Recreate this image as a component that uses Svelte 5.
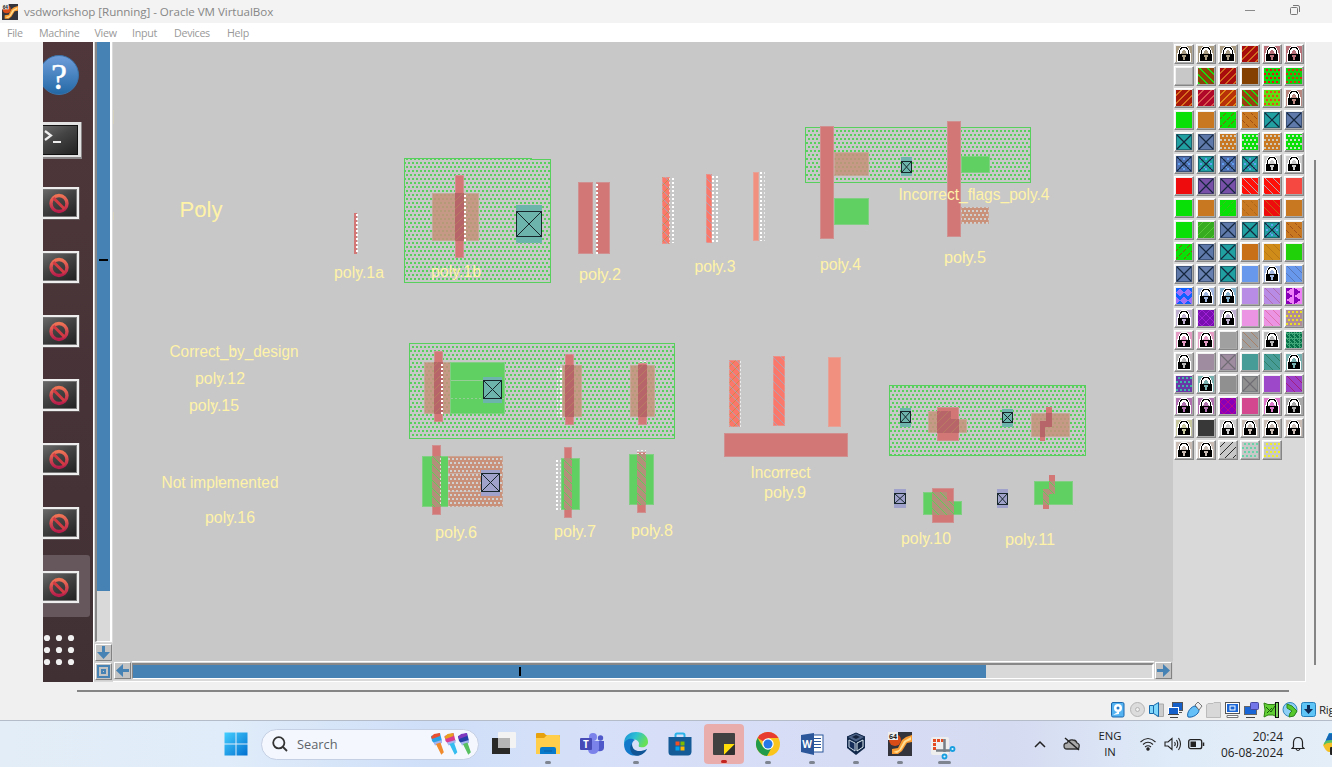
<script>
  const menus = [['File', 32], ['Machine', 55.5], ['View', 37.5], ['Input', 42], ['Devices', 53], ['Help', 40]];
  const stopped = [0, 1, 2, 3, 4, 5, 6];

  // Pixel diagonals, as unit squares, over an n by n tile.
  function hatch(n, test) {
    let d = '';
    for (let y = 0; y < n; y++) for (let x = 0; x < n; x++) if (test(x, y)) d += `M${x} ${y}h1v1h-1z`;
    return d;
  }
  const m = (v) => ((v % 8) + 8) % 8;
  const up = hatch(8, (x, y) => x + y === 7);
  const down = hatch(8, (x, y) => x === y);
  const inks = {
    slash: hatch(16, (x, y) => m(x + y) === 4 || m(x + y) === 5),
    thin: hatch(16, (x, y) => m(x + y) === 4),
    back: hatch(16, (x, y) => m(x - y) === 1 || m(x - y) === 2),
    fback: hatch(16, (x, y) => m(x - y) === 1),
    dslash: hatch(16, (x, y) => m(x + y) === 6 && m(x - y) < 5 && y % 15 > 0),
    dback: hatch(16, (x, y) => m(x - y) === 0 && m(x + y) < 5 && y % 15 > 0),
    dots: hatch(16, (x, y) => (y % 4 === 1 || y % 4 === 2) && ((x + ((y >> 2) % 2) * 2) % 4 >= 2)),
    wave: hatch(16, (x, y) => Math.abs(m(x + (y > 7 ? 4 : 0)) - 3.5) < (m(y) < 5 ? m(y) : 8 - m(y))),
    zig: hatch(16, (x, y) => Math.abs(m(y + (x > 7 ? 4 : 0)) - 3.5) < m(x) * 0.7),
    curl: hatch(16, (x, y) => Math.abs(m(x) - 3.5) + Math.abs(m(y) - 3.5) > 3 && Math.abs(m(x) - 3.5) + Math.abs(m(y) - 3.5) < 5),
    maze: hatch(16, (x, y) => ((x * 7 + y * 11 + x * y * 3) % 5) < 2)
  };

  const G = '#08e008', O = '#c87820', T = '#20a0a0', B = '#6079ab';
  // kind, ground, ink
  const layers = [
    ['lock', '#a99b82'], ['lock', '#a99b82'], ['lock', '#a99b82'], ['slash', '#a80c0c', '#d06c20'], ['lock', '#b87078'], ['lock', '#b87078'],
    ['solid', '#c8c8c8'], ['back', '#8c4408', '#18e010'], ['slash', '#a80c0c', '#d06820'], ['solid', '#844000'], ['dots', '#10d810', '#e81010'], ['dots', '#10d010', '#d83010'],
    ['slash', '#a81808', '#d87020'], ['slash', '#b00828', '#d85850'], ['slash', '#b83008', '#e08818'], ['back', '#984010', '#20d810'], ['dots', '#60e010', '#e84818'], ['lock', '#b88880'],
    ['solid', G], ['solid', O], ['dslash', G, '#905010'], ['dback', O, '#a04c10'], ['x', T], ['x', B],
    ['x', T], ['x', B], ['dots', O, '#d0c8b8'], ['dots', G, '#c8e0c8'], ['dots', O, '#d0c8b8'], ['dots', G, '#c8e0c8'],
    ['xd', '#5070b0'], ['xd', T], ['xd', '#5070b0'], ['xd', T], ['lock', '#cccccc'], ['lock', '#cccccc'],
    ['solid', '#ee0c0c'], ['x', '#7850a8'], ['x', '#7850a8'], ['fback', '#ff1008', '#b8a8b0'], ['fback', '#ff1008', '#b8a8b0'], ['solid', '#f44840'],
    ['solid', G], ['solid', O], ['dslash', G, '#40b820'], ['dback', O, '#b06818'], ['fback', '#ee0c0c', '#c86010'], ['solid', O],
    ['solid', G], ['thin', '#38ac20', '#58c838'], ['x', B], ['x', T], ['xd', T], ['dback', O, '#a05018'],
    ['dslash', G, '#905010'], ['x', B], ['x', T], ['solid', '#c87018'], ['fback', '#d08c18', '#b87818'], ['solid', '#20d008'],
    ['x', B], ['x', '#6880b0'], ['x', T], ['solid', '#6898ec'], ['lock', '#a0b4e0'], ['fback', '#6898ec', '#5878b8'],
    ['wave', '#1060ff', '#a070f8'], ['lock', '#a0b4e0'], ['lock', '#80b0cc'], ['solid', '#b88ce4'], ['fback', '#b88ce4', '#b070b0'], ['zig', '#8800b8', '#f080f8'],
    ['lock', '#c0b0d0'], ['curl', '#7810b0', '#a020d8'], ['lock', '#c0b0d0'], ['solid', '#ec94e4'], ['fback', '#ec94e4', '#e070b0'], ['dots', '#b08c98', '#e8e020'],
    ['lock', '#e49cc4'], ['lock', '#e49cc4'], ['solid', '#a0a0a0'], ['fback', '#a0a0a0', '#a88068'], ['lock', '#b8b8b8'], ['maze', '#087048', '#40a878'],
    ['lock', '#b8b8b8'], ['solid', '#a08ca0'], ['xg', '#a08ca0'], ['solid', '#489c98'], ['fback', '#489c98', '#308068'], ['lock', '#78b0b0'],
    ['dots', '#6838a8', '#40b8a8'], ['lock', '#78b0b0'], ['solid', '#909090'], ['xg', '#909090'], ['solid', '#9c48c8'], ['fback', '#9c40c8', '#a02080'],
    ['lock', '#b070b0'], ['lock', '#b070b0'], ['curl', '#8800b8', '#b80890'], ['solid', '#d44890'], ['lock', '#dc74c8'], ['lock', '#a8a8a8'],
    ['lock', '#c8c8a0'], ['solid', '#383838'], ['lock', '#cccccc'], ['lock', '#c8bcb4'], ['lock', '#c8bcb4'], ['lock', '#c8bcb4'],
    ['lock', '#c8bcb4'], ['lock', '#c8bcb4'], ['thin', '#c8c8c8', '#282828'], ['dots', '#c8c8c8', '#68d4a8'], ['dots', '#c8c8c8', '#f0f028']
  ];

  const wells = [[404, 158, 147, 125], [805, 127, 226, 56], [409, 343, 266, 96], [889, 385, 197, 71]];

  // fill class, x, y, w, h
  const shapes = [
    ['poly', 354, 213, 3, 41],
    ['diff', 432, 193, 47, 48], ['poly', 455, 175, 9, 83], ['gate', 455, 193, 9, 48],
    ['poly', 578, 182, 15, 72], ['poly', 596, 182, 14, 72],
    ['res', 662, 177, 8, 67], ['resb', 706, 174, 6, 69], ['soft', 753, 172, 6, 69],
    ['diff', 834, 152, 35, 24], ['act', 834, 198, 35, 27], ['poly', 820, 126, 14, 113],
    ['act', 961, 156, 29, 17], ['tap', 961, 207, 28, 17], ['poly', 947, 121, 14, 116],
    ['diff', 424, 362, 27, 52], ['act', 450, 362, 55, 52], ['poly', 434, 351, 9, 71], ['gate', 434, 362, 9, 52],
    ['diff', 562, 365, 20, 52], ['poly', 565, 354, 9, 71], ['gate', 565, 365, 9, 52],
    ['diff', 630, 365, 25, 52], ['poly', 638, 363, 9, 62], ['gate', 638, 365, 9, 52],
    ['act', 422, 456, 27, 51], ['tap', 448, 456, 55, 51], ['poly', 432, 445, 9, 70], ['ngate', 432, 456, 9, 51],
    ['act', 561, 458, 19, 52], ['poly', 564, 447, 8, 71], ['ngate', 564, 458, 8, 52],
    ['act', 629, 454, 25, 51], ['poly', 637, 452, 9, 61], ['ngate', 637, 454, 9, 51],
    ['res', 729, 360, 11, 67], ['resb', 773, 356, 12, 70], ['soft', 828, 357, 13, 70], ['poly', 724, 433, 124, 24],
    ['diff', 928, 411, 29, 22], ['diff', 957, 419, 10, 14], ['poly', 937, 407, 22, 34], ['gate', 937, 411, 14, 22], ['gate', 951, 419, 8, 14],
    ['diff', 1031, 413, 39, 24],
    ['act', 923, 492, 24, 23], ['act', 947, 501, 15, 14], ['poly', 932, 488, 22, 35], ['ngate', 932, 492, 15, 23], ['ngate', 947, 501, 7, 14],
    ['act', 1034, 481, 39, 24]
  ];

  // x, y of pad, w, h, contact y, contact h, class
  const contacts = [
    [516, 205, 26, 38, 211, 26, 'teal'], [901, 157, 11, 19, 161, 12, 'teal'], [483, 377, 19, 26, 380, 19, 'teal'],
    [481, 470, 19, 26, 473, 19, 'blue'], [900, 408, 11, 19, 411, 12, 'teal'], [1002, 409, 11, 18, 412, 11, 'teal'],
    [894, 489, 12, 19, 493, 11, 'blue'], [997, 489, 11, 19, 493, 12, 'blue']
  ];

  // x, y1, y2, width
  const ticks = [
    [356, 214, 254, 2], [464, 195, 241, 2], [596, 184, 254, 2], [669, 178, 243, 1], [672, 178, 243, 2],
    [712, 176, 243, 2], [716, 176, 243, 2], [760, 172, 241, 2], [764, 172, 241, 1], [441, 364, 414, 2],
    [560, 368, 417, 2], [557, 368, 417, 1], [440, 458, 506, 1], [556, 460, 510, 2], [560, 460, 510, 1], [740, 361, 427, 1]
  ];

  const labels = [
    ['Poly', 179.5, 217, 43, 22.5], ['poly.1a', 334, 278, 50], ['poly.1b', 431, 277, 50], ['poly.2', 579, 280, 42], ['poly.3', 694.5, 272, 41],
    ['poly.4', 820, 270, 41], ['Incorrect_flags_poly.4', 898.5, 200, 151], ['poly.5', 944, 263, 42],
    ['Correct_by_design', 169.5, 357, 129], ['poly.12', 195, 384, 50], ['poly.15', 189, 411, 50],
    ['Not implemented', 161.5, 488, 117], ['poly.16', 205, 523, 50], ['poly.6', 435, 538, 42], ['poly.7', 554, 537, 42],
    ['poly.8', 631, 536, 42], ['Incorrect', 750.5, 478, 60], ['poly.9', 764, 498, 42], ['poly.10', 901, 544, 50], ['poly.11', 1005, 545, 50]
  ];
</script>

{#snippet magic()}
  <rect width="24" height="24" fill="#34343c" />
  <circle cx="7" cy="8" r="6" fill="#d94b17" />
  <path d="M4 22V17L10 16L14 8L18 5L24 3V10L19 11L14 19L10 22Z" fill="#f99b31" />
  <path d="M5 20L11 18L16 9L23 5L23 8L18 10L13 18L9 21Z" fill="#ffe095" />
  <rect width="10" height="8" fill="#eee" />
  <text x="1" y="7" font-size="7" font-weight="700" fill="#222">64</text>
{/snippet}

<div class="screen">
  <header class="title">
    <svg width="16" height="16" viewBox="0 0 24 24">{@render magic()}</svg>
    <span>vsdworkshop [Running] - Oracle VM VirtualBox</span>
    <div class="winbtns">
      <svg width="12" height="12"><path d="M1 6.500H11" stroke="#8a8a8a" /></svg>
      <svg width="12" height="12" fill="none" stroke="#777"><rect x="1.500" y="3.500" width="7" height="7" rx="1" /><path d="M4 1.500H9Q10.500 1.500 10.500 3V8" /></svg>
    </div>
  </header>
  <nav>{#each menus as [name, w]}<span style="width:{w}px" class="menu">{name}</span>{/each}</nav>

  <main>
    <aside class="dock">
      <svg width="50" height="640" viewBox="43 42 50 640">
        <defs>
          <linearGradient id="help" x2="0" y2="1"><stop stop-color="#6f9edb" /><stop offset="1" stop-color="#2268a5" /></linearGradient>
          <linearGradient id="term" x2="1" y2="1"><stop stop-color="#777" /><stop offset=".5" stop-color="#444" /><stop offset="1" stop-color="#222" /></linearGradient>
          <linearGradient id="ban" x2="0" y2="1"><stop stop-color="#ee7355" /><stop offset="1" stop-color="#b81e4b" /></linearGradient>
        </defs>
        <circle cx="59" cy="75" r="19.500" fill="url(#help)" stroke="#3b73aa" />
        <text x="59" y="88.500" text-anchor="middle" class="q">?</text>
        <rect x="30" y="122" width="52" height="37" fill="#8a8587" /><rect x="30" y="122" width="51" height="35" fill="#e2e2e2" />
        <rect x="30" y="125" width="48" height="30" fill="#111" /><rect x="30" y="126" width="47" height="28" fill="url(#term)" />
        <path d="M45 131L51 135.500L45 140" fill="none" stroke="#eee" stroke-width="2.200" /><path d="M53 142H61" stroke="#eee" stroke-width="2" />
        <rect x="30" y="555" width="60" height="62" rx="3" fill="#66575c" />
        {#each stopped as i}
          <g transform="translate(0 {i * 64})">
            <rect x="30" y="187" width="50" height="33" fill="#777" opacity=".5" /><rect x="30" y="187" width="49" height="32" fill="#eee" />
            <rect x="30" y="189" width="47" height="28" fill="#777" /><rect x="30" y="190" width="46" height="26" fill="url(#term)" />
            <circle cx="59" cy="203.500" r="8" fill="none" stroke="url(#ban)" stroke-width="3.400" />
            <path d="M53.500 198L64.500 209" stroke="#d23b42" stroke-width="3" />
          </g>
        {/each}
        {#each [638, 650, 662] as y}{#each [47, 59, 71] as x}<circle cx={x} cy={y} r="3.100" fill="#f0f0f0" />{/each}{/each}
      </svg>
    </aside>

    <div class="vbar">
      <div class="vtrack"><div class="vthumb"><i></i></div></div>
      <div class="btn"><svg width="13" height="13"><path d="M5 0H8V6H13L6.500 13L0 6H5Z" /></svg></div>
      <div class="btn"><svg width="13" height="13"><path d="M0 0H13V13H0ZM2 2V11H11V2ZM4 4H9V9H4ZM6 6V7H7V6Z" fill-rule="evenodd" /></svg></div>
    </div>

    <section class="layout">
      <svg class="canvas" width="1060" height="619" viewBox="113 42 1060 619">
        <defs>
          <pattern id="well" width="4" height="8" patternUnits="userSpaceOnUse">
            <path d="M0 2h2v2h-2zM2 6h2v2h-2z" fill="#58d05c" />
          </pattern>
          <pattern id="tap" width="4" height="8" patternUnits="userSpaceOnUse">
            <rect width="4" height="8" fill="#c9917a" /><path d="M0 2h2v2h-2zM2 6h2v2h-2z" fill="#d0d0d0" />
          </pattern>
          <pattern id="gate" width="8" height="8" patternUnits="userSpaceOnUse">
            <rect width="8" height="8" fill="#b8656a" /><path d={up} fill="#b97c62" />
          </pattern>
          <pattern id="ngate" width="8" height="8" patternUnits="userSpaceOnUse">
            <rect width="8" height="8" fill="#b29079" /><path d={down} fill="#62cc58" />
          </pattern>
          <pattern id="resb" width="8" height="8" patternUnits="userSpaceOnUse">
            <rect width="8" height="8" fill="#f9786b" /><path d={down} fill="#b0a0b0" />
          </pattern>
          <pattern id="res" width="8" height="8" patternUnits="userSpaceOnUse">
            <rect width="8" height="8" fill="#f9786b" /><path d={up} fill="#cf8648" /><path d={down} fill="#b0a0b0" />
          </pattern>
        </defs>
        <g shape-rendering="crispEdges">
          {#each wells as [x, y, w, h]}
            <rect {x} {y} width={w} height={h} fill="url(#well)" />
            <rect x={x + 0.5} y={y + 0.5} width={w - 1} height={h - 1} fill="none" stroke="#58d05c" />
          {/each}
          <path d="M532 158.500H551" stroke="#c8c8c8" /><path d="M532 159.500H551" stroke="#58d05c" />
          {#each shapes as [c, x, y, w, h]}
            <rect class={c} {x} {y} width={w} height={h} />
            {#if c !== 'gate' && c !== 'ngate' && w > 3}<rect x={x + 0.5} y={y + 0.5} width={w - 1} height={h - 1} fill="none" stroke="#ccc" opacity=".3" />{/if}
          {/each}
          <path class="poly" d="M1046 407H1052V427H1045V441H1040V421H1046Z" />
          <path d="M1046 413H1052V427H1045V437H1040V421H1046Z" fill="#b8656a" />
          <path class="poly" d="M1049 475H1055V494H1049V509H1043V489H1049Z" />
          <path d="M1049 481H1055V494H1049V505H1043V489H1049Z" fill="url(#ngate)" />
          <path d="M451 380.500H483M448 473.500H481M448 491.500H481" stroke="#ccc" opacity=".5" />
          <path d="M451 398.500H483M502 398.500H505" stroke="#ccc" stroke-dasharray="2 2" opacity=".5" />
          {#each ticks as [x, a, b, w]}
            <path d="M{x + w / 2} {a}V{b}" stroke="#fff" stroke-width={w} stroke-dasharray="2 2" opacity={w === 1 ? 0.65 : 1} />
          {/each}
          <path d="M640 361.500H646M637 450.500H646M637 453.500H646" stroke="#fff" stroke-dasharray="2 2" opacity=".8" />
          {#each contacts as [x, y, w, h, cy, ch, c]}
            <rect class={c} {x} {y} width={w} height={h} />
            <rect x={x + 0.5} y={cy + 0.5} width={w - 1} height={ch - 1} fill="none" stroke="#17272b" />
            <path d="M{x + 1} {cy + 1}L{x + w - 1} {cy + ch - 1}M{x + w - 1} {cy + 1}L{x + 1} {cy + ch - 1}" stroke="#17272b" shape-rendering="auto" />
          {/each}
        </g>
        {#each labels as [t, x, y, w, s = 15.8]}
          <text class="label" {x} {y} textLength={w} lengthAdjust="spacingAndGlyphs" font-size={s}>{t}</text>
          <path d="M{x + w / 2 - 2} {y - s * 0.3 - 2.5}h3m-1.500 -1.500v3" stroke="#fff3a8" stroke-width=".7" />
        {/each}
        <path d="M113.500 212V220M113.500 110V124" stroke="#ddd8b4" opacity=".5" />
      </svg>
      <div class="hbar">
        <div class="btn"><svg width="13" height="13"><path d="M13 5V8H7V13L0 6.500L7 0V5Z" /></svg></div>
        <div class="htrack"><div class="hthumb"><i></i></div></div>
        <div class="btn"><svg width="13" height="13"><path d="M0 5V8H6V13L13 6.500L6 0V5Z" /></svg></div>
      </div>
    </section>

    <aside class="palette">
      {#each layers as [k, bg, fg]}
        <div class="cell">
          <svg width="16" height="16" shape-rendering="crispEdges">
            <rect width="16" height="16" fill={bg} />
            {#if inks[k]}
              <path d={inks[k]} fill={fg} />
            {:else if k === 'x' || k === 'xd' || k === 'xg'}
              {#if k === 'xd'}<path d="M2 2h2v2h-2zM7 2h2v2h-2zM12 2h2v2h-2zM2 7h2v2h-2zM12 7h2v2h-2zM2 12h2v2h-2zM7 12h2v2h-2zM12 12h2v2h-2zM5 5h2v2h-2zM10 5h2v2h-2zM5 10h2v2h-2zM10 10h2v2h-2z" fill="#60a0f0" />{/if}
              <path d="M1 1L15 15M15 1L1 15" stroke={k === 'xg' ? '#706c74' : '#14263c'} stroke-width="1.200" shape-rendering="auto" />
              <rect x=".5" y=".5" width="15" height="15" fill="none" stroke="#14263c" opacity={k === 'xg' ? 0.15 : 0.45} />
            {:else if k === 'lock'}
              <path d="M1 16V7H2V4H3V2H4V1H5V0H11V1H12V2H13V4H14V7H15V16Z" fill="#fff" />
              <path d="M3 8V4H4V2H5V1H11V2H12V4H13V8H11V5H10V3H6V5H5V8Z" fill="#000" />
              <path d="M4 8V4H5V3H6V2H10V3H11V4H12V8Z" fill="#fff" />
              <path d="M5 7H6V5H7V4H9V5H10V7H11V8H5Z" fill={bg} />
              <rect x="2" y="8" width="12" height="7" fill="#000" />
              <path d="M6 9h4v2h-1v3h-2v-3h-1z" fill={bg} />
            {/if}
          </svg>
        </div>
      {/each}
    </aside>
    <div class="vline"></div>
  </main>

  <div class="status">
    <div class="hline"></div>
    <div class="icons">
      <svg width="224" height="20" viewBox="1108 700 224 20">
        <rect x="1111.500" y="702.500" width="12.500" height="14.500" rx="1.500" fill="#56b3f1" stroke="#1b67ae" /><circle cx="1118" cy="708" r="4" fill="#fff" /><circle cx="1118" cy="708" r="1.500" fill="#2b7cc8" /><path d="M1113 715L1119 711V714Z" fill="#fff" />
        <circle cx="1137.500" cy="709.500" r="7" fill="#dcdcdc" stroke="#b4b4b4" /><circle cx="1137.500" cy="709.500" r="2" fill="#eee" stroke="#b4b4b4" />
        <path d="M1158 704H1163.500V716.500H1157Z" fill="#ccc" stroke="#aaa" /><path d="M1149.500 705.500H1153.500V713.500H1149.500ZM1153.500 705.500L1158.500 702.500V716.500L1153.500 713.500" fill="#7fd8fc" stroke="#1568aa" />
        <rect x="1172.500" y="702.500" width="10" height="8" fill="#1560c8" stroke="#555" /><path d="M1176 712.500H1182" stroke="#555" /><rect x="1168.500" y="707.500" width="10" height="7" fill="#1560c8" stroke="#fff" /><path d="M1168 714.500H1179M1170 717.500H1178" stroke="#444" />
        <path d="M1188 717C1186 712 1192 706 1195 706L1199 710C1199 714 1193 718 1188 717Z" fill="#66c0f8" stroke="#1564ac" /><path d="M1195 705L1198 702L1202 706L1199 710Z" fill="#eee" stroke="#777" />
        <path d="M1206.500 717.500V705L1208 703.500H1213L1214 702.500H1220.500V717.500Z" fill="#d8d8d8" stroke="#bbb" />
        <rect x="1225.500" y="702.500" width="14" height="11" fill="#fff" stroke="#555" /><rect x="1227" y="704" width="11" height="8" fill="#1a66d6" /><rect x="1230" y="706" width="5" height="4" fill="none" stroke="#fff" /><path d="M1227 715.500H1238V717.500H1227Z" fill="#fff" stroke="#777" />
        <rect x="1244.500" y="706.500" width="12" height="8" fill="#1a66d6" stroke="#666" /><rect x="1250.500" y="702.500" width="8" height="7" rx="1" fill="#7276e8" stroke="#4547a0" /><path d="M1246 717.500H1255" stroke="#444" />
        <path d="M1264 703L1268 704.500H1274L1277 703V717L1273 715H1268L1264 717L1265 710Z" fill="#62cf35" stroke="#2d8212" /><path d="M1266 707L1271 712L1275 706M1267 713L1272 708" fill="none" stroke="#175a0b" /><rect x="1275.500" y="702.500" width="3" height="15" fill="#7dd65d" stroke="#111" />
        <circle cx="1290" cy="709.500" r="7" fill="#8fd0f6" stroke="#3387bc" /><path d="M1287 704L1292 706L1297 711L1294 716L1289 717L1290 713L1292 711L1287 708Z" fill="#55c82c" stroke="#2f851b" />
        <rect x="1301.500" y="702.500" width="14" height="14" rx="2" fill="#5fc4f6" stroke="#247fba" /><path d="M1307 705H1310V709H1313L1308.500 714L1304 709H1307Z" fill="#102b55" />
        <text x="1319" y="714" font-size="11.500" letter-spacing="-.3" fill="#222">Right</text>
      </svg>
    </div>
  </div>

  <footer>
    <div class="app">
      <svg width="24" height="24"><defs><linearGradient id="win" x2="1" y2="1"><stop stop-color="#45cfff" /><stop offset="1" stop-color="#0070d0" /></linearGradient></defs><path d="M.5 .5H11.500V11.500H.5ZM12.500 .5H23.500V11.500H12.500ZM.5 12.500H11.500V23.500H.5ZM12.500 12.500H23.500V23.500H12.500Z" fill="url(#win)" /></svg>
    </div>
    <div class="search">
      <svg width="16" height="16" fill="none" stroke="#333" stroke-width="1.800"><circle cx="6.800" cy="6.800" r="5.600" /><path d="M11 11L15 15" /></svg>
      <span>Search</span>
      <svg class="brushes" width="42" height="24">
        {#each [['#e8502f', '#2ba3e8', '#f18a2b'], ['#e8a020', '#d83a90', '#35bdf0'], ['#8038c0', '#253fa8', '#58c060']] as [a, b, c], i}
          <g transform="translate({i * 13.5} 0)"><path d="M0 4L9 1L11 9L4 12L1 9Z" fill={b} /><path d="M0 5L3 2L9 1L9 4L1 7Z" fill={a} /><path d="M2.500 10.500L11 8L11 11L4 13.500Z" fill="#a3b4ef" /><path d="M6 12.500L9 11.500L12 20L10.500 21.500Z" fill={c} stroke={c} stroke-width="1.500" /></g>
        {/each}
      </svg>
    </div>
    <div class="app first"><svg width="24" height="24"><rect y="6" width="18" height="16" fill="#292927" /><rect x="6" width="18" height="16" rx="1" fill="#f3f3f3" /><rect x="6" y="6" width="12" height="10" fill="#b5b5b5" /></svg></div>
    <div class="app"><svg width="24" height="24"><path d="M0 2Q0 1 1 1H8L10 3H23Q24 3 24 5V22H0Z" fill="#e6a10d" /><path d="M0 6H8L11 3H23L24 5V22H0Z" fill="#ffce4a" /><path d="M4 22V17Q4 15 6 15H18Q20 15 20 17V22Z" fill="#087acb" /><path d="M8 19H16" stroke="#0a5ca0" /></svg><b></b></div>
    <div class="app"><svg width="24" height="24"><circle cx="20.500" cy="6" r="2.700" fill="#5059c9" /><path d="M17 9H24V16Q23 20 18 19Z" fill="#5059c9" /><circle cx="13" cy="5" r="4" fill="#7b83eb" /><path d="M8 9H19V17Q18 22 13 22Q8 22 8 17Z" fill="#7b83eb" /><rect y="6" width="12" height="12" rx="1" fill="#464bb7" /><text x="6" y="16" text-anchor="middle" font-size="10" font-weight="700" fill="#fff">T</text></svg></div>
    <div class="app"><svg width="24" height="24"><defs><linearGradient id="edge" x2="1" y2=".4"><stop stop-color="#1a8ad6" /><stop offset=".5" stop-color="#2cc0d4" /><stop offset="1" stop-color="#67e058" /></linearGradient></defs><path d="M0 12C0 3 6 0 12 0C20 0 24 5 24 10C24 14 20 16 16 15C14 15 15 13 15 11C14 7 5 5 0 12Z" fill="url(#edge)" /><path d="M0 12C2 6 8 6 11 8C6 10 7 20 16 20C18 20 21 19 23 17C18 26 0 27 0 12Z" fill="#1278c9" /><path d="M8 12C8 19 15 21 23 17C20 23 14 25 10 23C6 21 5 14 8 12Z" fill="#105596" /></svg><b></b></div>
    <div class="app"><svg width="24" height="24"><path d="M7.500 6V3Q7.500 1.500 9 1.500H15Q16.500 1.500 16.500 3V6" fill="none" stroke="#29b2e8" stroke-width="2" /><path d="M.5 5H23.500V20Q23 23.500 20 23.500H4Q.5 23.500 .5 20Z" fill="#155b98" /><path d="M7.500 9.500h4v4h-4z" fill="#f25022" /><path d="M12.500 9.500h4v4h-4z" fill="#7fba00" /><path d="M7.500 14.500h4v4h-4z" fill="#00a4ef" /><path d="M12.500 14.500h4v4h-4z" fill="#ffb900" /></svg></div>
    <div class="app on"><svg width="24" height="24"><rect x="1" y="1" width="22" height="22" rx="1" fill="#414141" /><path d="M12 12H23L12 23Z" fill="#ffdb08" /><path d="M23 12V22L22 23H12Z" fill="#303030" /></svg><b></b></div>
    <div class="app"><svg width="24" height="24"><circle cx="12" cy="12" r="12" fill="#fbc41c" /><path d="M12 12L1.600 6A12 12 0 0 1 22.400 6H12Z" fill="#e63b2e" /><path d="M1.600 6A12 12 0 0 0 11 24L16 15L12 12L7 15Z" fill="#229b4b" /><circle cx="12" cy="12" r="5.700" fill="#fff" /><circle cx="12" cy="12" r="4.500" fill="#2878e8" /></svg><b></b></div>
    <div class="app"><svg width="24" height="24"><rect x="12" y="3" width="11" height="17" fill="#fff" stroke="#2b579a" /><path d="M14 6.500H21M14 9.500H21M14 12.500H21M14 15.500H21" stroke="#2b579a" /><path d="M1 3L14 1V23L1 20Z" fill="#2b579a" /><text x="7.200" y="16" text-anchor="middle" font-size="10" font-weight="700" fill="#fff">W</text></svg><b></b></div>
    <div class="app"><svg width="24" height="24"><path d="M12 1L21 5V16L12 23L3 16V5Z" fill="#13294b" /><path d="M3 5L12 1L21 5L12 10Z" fill="#4c6286" stroke="#13294b" /><path d="M8 5L12 3L16 5L12 7Z" fill="#14233d" /><path d="M5 8L11 11V19L5 15Z" fill="#162f5a" stroke="#c7d7e4" /><path d="M19 8L13 11V19L19 15Z" fill="#0f2444" stroke="#e0edf3" /></svg><b></b></div>
    <div class="app"><svg width="24" height="24">{@render magic()}</svg><b></b></div>
    <div class="app"><svg class="snip" width="26" height="26"><rect x="0" y="2" width="18" height="18" rx="2" fill="#eee" /><path d="M3.500 15V5.500H12.500" fill="none" stroke="#e54b20" stroke-width="3" stroke-dasharray="3 1" /><path d="M13.500 4V17M5 15.500H19" stroke="#777e85" stroke-width="2.500" fill="none" /><circle cx="21.500" cy="14" r="2" fill="#dff3ff" stroke="#199fe0" stroke-width="1.800" /><circle cx="13.500" cy="21.500" r="2" fill="#dff3ff" stroke="#199fe0" stroke-width="1.800" /></svg><b class="wide"></b></div>

    <div class="tray">
      <svg width="12" height="8" fill="none" stroke="#222" stroke-width="1.500"><path d="M1 7L6 2L11 7" /></svg>
      <svg class="cloud" width="18" height="14"><path d="M4 12Q1 12 1 9Q1 6 4 6Q6 2 10 3Q13 3 14 6Q17 7 16 10Q16 12 14 12Z" fill="#aaa" stroke="#333" stroke-width="1.300" /><path d="M2 1L16 13" stroke="#222" stroke-width="1.500" /></svg>
      <div class="lang">ENG<br />IN</div>
      <svg class="wifi" width="16" height="14" fill="none" stroke="#222" stroke-width="1.100"><path d="M.5 5Q8 -2 15.500 5M3 7.500Q8 3 13 7.500M5 10Q8 7.500 11 10" /><circle cx="8" cy="12" r="1.200" fill="#222" /></svg>
      <svg class="sound" width="18" height="14" fill="none" stroke="#222" stroke-width="1.100"><path d="M1 5H4L8 1.500V12.500L4 9H1ZM10.500 5Q12 7 10.500 9M12.500 3Q15 7 12.500 11M14.500 1Q18.500 7 14.500 13" /></svg>
      <svg class="batt" width="17" height="12"><rect x=".7" y="1.700" width="13" height="9" rx="2" fill="none" stroke="#222" stroke-width="1.300" /><rect x="2.500" y="3.500" width="5.500" height="5.500" fill="#222" /><path d="M15.500 4.500V8" stroke="#222" stroke-width="1.500" /></svg>
      <div class="clock">20:24<br />06-08-2024</div>
      <svg class="bell" width="14" height="16" fill="none" stroke="#222" stroke-width="1.200"><path d="M2.500 11V6Q3 1.500 7 1.500Q11 1.500 11.500 6V11L13 12.500H1ZM5 13Q7 16 9 13" /></svg>
      <svg class="pilot" width="10" height="24"><path d="M2 10L6 1H10V14H4Q0 14 2 10Z" fill="#1791c8" /><path d="M3 8L6 2H10V8Z" fill="#1566b5" /><path d="M0 13Q2 9 10 10V20H6Q3 20 0 13Z" fill="#f4c028" /><path d="M1 11Q3 8 10 8V11Q4 10 1 13Z" fill="#5cc060" /><rect x="7" y="15" width="6" height="8" rx="1" fill="#222" /></svg>
    </div>
  </footer>
</div>

<style>
  :global(body) { overflow: hidden; }
  .screen { width: 1332px; height: 767px; overflow: hidden; display: flex; flex-direction: column; background: #f0f0f0; font-family: "Open Sans", "Noto Sans", sans-serif; }
  svg { display: block; flex: none; }
  .title { height: 23px; flex: none; display: flex; align-items: center; padding-left: 2px; background: #f3f3f3; font-size: 11.6px; color: #878787; gap: 6px; letter-spacing: -.05px; }
  .winbtns { margin-left: auto; display: flex; gap: 33px; padding: 0 31px 3px 0; }
  nav { height: 19px; flex: none; display: flex; align-items: center; padding-left: 7px; background: #fff; font-size: 10.7px; color: #999; letter-spacing: -.3px; box-sizing: border-box; }
  .menu { flex: none; white-space: nowrap; }
  main { flex: none; height: 640px; display: grid; grid-template-columns: 50px 20px 1060px 133px 1fr; padding-left: 43px; }
  .dock { background: linear-gradient(#4f373b, #403034); }
  .q { font: 36px "Liberation Serif", serif; fill: #fff; stroke: #fff; stroke-width: .4px; }
  .vbar { background: #d9d9d9; border-left: 1px solid #fff; box-sizing: border-box; display: flex; flex-direction: column; align-items: center; gap: 2px; }
  .vtrack { width: 13px; height: 599px; border: solid #fff; border-width: 0 2px 1px 0; border-left: 2px solid #888; background: #d9d9d9; }
  .vthumb { height: 549px; background: #4682b4; display: flex; align-items: flex-start; justify-content: center; }
  .vthumb i { width: 9px; height: 2px; background: #000; margin-top: 217px; }
  .btn { width: 13px; height: 13px; flex: none; padding: 1px; border: 1px solid; border-color: #fff #828282 #828282 #fff; box-shadow: 0 0 0 1px #d0d0d0; background: #c3c3c3; }
  .btn path { fill: #4682b4; }
  .layout { display: flex; flex-direction: column; }
  .canvas { background: #c8c8c8; }
  .hbar { height: 21px; background: #d9d9d9; display: flex; align-items: center; padding: 0 1px 2px 1px; box-sizing: border-box; gap: 1px; border-bottom: 1px solid #fff; border-top: 1px solid #fff; }
  .htrack { flex: 1; height: 13px; border: solid #888; border-width: 2px 2px 1px 1px; border-right-color: #fff; border-bottom-color: #fff; }
  .hthumb { width: 853px; height: 13px; background: #4682b4; display: flex; align-items: center; }
  .hthumb i { width: 2px; height: 9px; background: #000; margin-left: 386px; }
  .palette { background: #d9d9d9; border: solid #fff; border-width: 0 1px 1px 0; box-sizing: border-box; display: grid; grid-template-columns: repeat(6, 20px); grid-auto-rows: 20px; gap: 2px; padding: 2px 0 0 1px; align-content: start; }
  .cell { border: 1px solid; border-color: #fff #858585 #858585 #fff; width: 18px; height: 18px; box-sizing: content-box; display: grid; place-items: center; background: #e6e6e6; box-shadow: inset -1px -1px #a9a9a9, inset 1px 1px #f0f0f0; }
  .vline { width: 2px; height: 505px; background: #858585; margin: 118px 0 0 8px; }
  .status { flex: none; height: 38px; box-sizing: border-box; padding: 8px 0 0 77px; }
  .hline { width: 1212px; height: 2px; background: #858585; }
  .icons { padding: 8px 0 0 1031px; width: 224px; }
  footer { flex: none; height: 47px; box-sizing: border-box; border-top: 1px solid #b4bbc9; background: linear-gradient(90deg, #e2edf7 0%, #e0ecf9 17%, #cfdff8 32%, #d6e0f8 45%, #d7dcf5 63%, #d5dbf1 76%, #dfebf8 88%, #e4eef8 100%); display: flex; align-items: center; padding-left: 214px; color: #222; }
  .app { width: 44px; height: 46px; display: flex; flex: none; flex-direction: column; align-items: center; box-sizing: border-box; padding-top: 11px; }
  .app b { width: 6px; height: 3px; border-radius: 2px; background: #7e8590; margin-top: 5px; }
  .app .wide { width: 13px; margin-top: 0; }
  .snip { margin-top: 3px; }
  .on { width: 40px; height: 40px; margin: 0 2px; background: #e9aeac; border-radius: 4px; padding-top: 8px; }
  .on b { background: #c42420; margin-top: 4px; }
  .search { width: 218px; height: 31px; flex: none; box-sizing: border-box; margin-left: 3px; border: 1px solid #c5d0e5; border-radius: 16px; background: #f4f8fe; display: flex; align-items: center; padding: 0 5px 0 10px; gap: 9px; font-size: 12.8px; color: #60646a; }
  .brushes { margin-left: auto; }
  .first { margin-left: 3px; }
  .tray { display: flex; align-items: center; margin-left: 68px; height: 100%; font-size: 11.3px; line-height: 16px; flex: none; }
  .cloud { margin-left: 17px; }
  .lang { width: 32px; margin-left: 13px; text-align: center; }
  .wifi { margin-left: 14px; }
  .sound { margin-left: 8px; }
  .batt { margin-left: 6px; }
  .clock { width: 78px; text-align: right; white-space: nowrap; font-size: 11.9px; }
  .bell { margin-left: 8px; }
  .pilot { margin-left: 18px; }
  .label { font-family: "Liberation Sans", Arial, sans-serif; fill: #fff3a8; }
  .poly { fill: #d37676; }
  .diff { fill: #c4907a; fill-opacity: .85; }
  .gate { fill: url(#gate); }
  .ngate { fill: url(#ngate); }
  .act { fill: #60d062; }
  .tap { fill: url(#tap); }
  .res { fill: url(#res); }
  .resb { fill: url(#resb); }
  .soft { fill: #f29080; }
  .teal { fill: #6cb4ac; }
  .blue { fill: #a0a2cc; }
</style>
